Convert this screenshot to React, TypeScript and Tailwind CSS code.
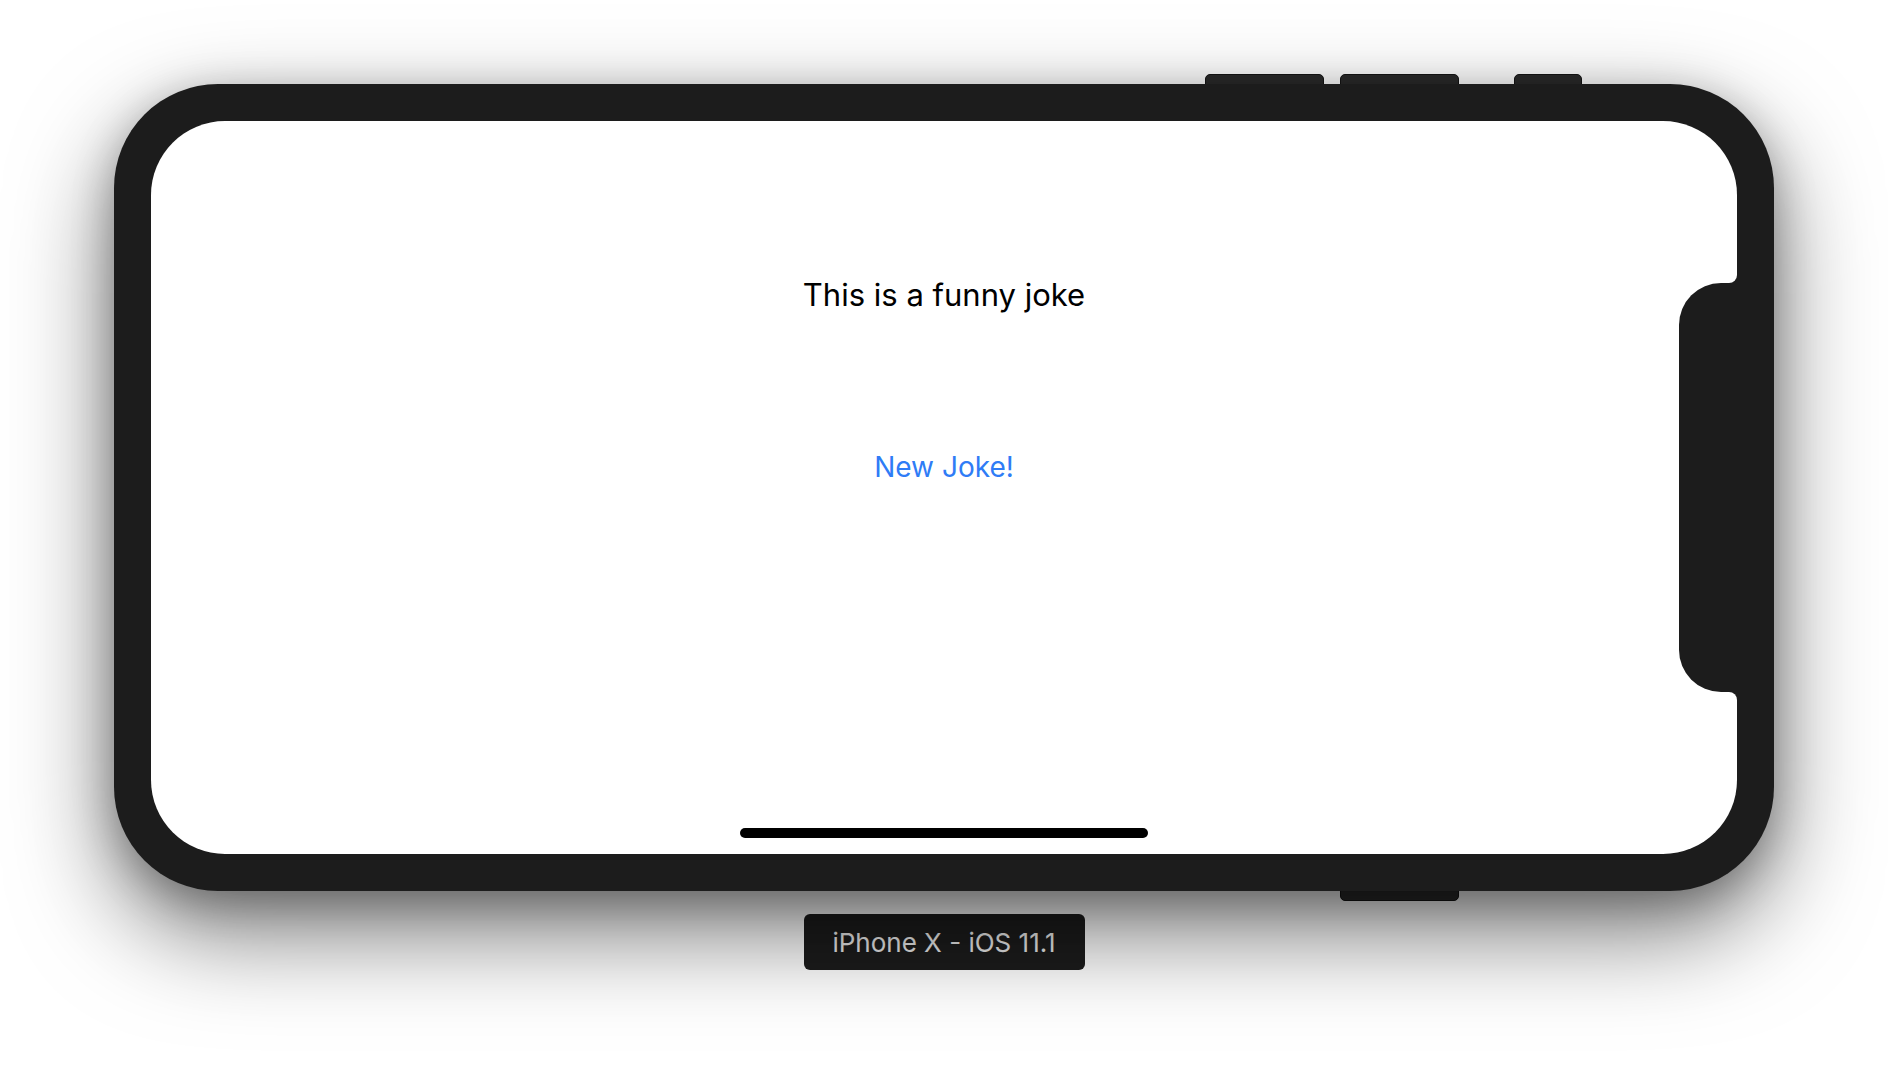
import React from 'react';

const sans = 'font-["Inter","Noto_Sans",sans-serif]';

function SideButton({ width, top }: { width: string; top?: boolean }) {
  return (
    <div
      className={`h-[11px] shrink-0 bg-[#2b2b2b] border border-[#151515] ${width} ${
        top ? 'rounded-t-[5px]' : 'rounded-b-[5px]'
      }`}
    />
  );
}

function Fillet({ corner }: { corner: string }) {
  return (
    <div className="h-[8px] w-[8px] bg-[#1c1c1c]">
      <div className={`h-full w-full bg-white ${corner}`} />
    </div>
  );
}

function Screen() {
  return (
    <div className="relative flex h-full w-full flex-col items-center overflow-hidden rounded-[74px] bg-white">
      <p className={`${sans} mt-[158px] text-[31px] leading-none text-black`}>This is a funny joke</p>
      <button className={`${sans} mt-[143px] text-[28px] leading-none text-[#2f7cf6]`}>New Joke!</button>
      <div className="mt-auto mb-[16px] h-[10px] w-[408px] rounded-full bg-black" />

      {/* sensor housing, seen from the side in landscape */}
      <div className="absolute right-0 top-[154px] flex flex-col items-end">
        <Fillet corner="rounded-br-[8px]" />
        <div className="h-[409px] w-[58px] rounded-l-[42px] bg-[#1c1c1c]" />
        <Fillet corner="rounded-tr-[8px]" />
      </div>
    </div>
  );
}

export default function App() {
  return (
    <div className="flex h-[1070px] w-[1888px] flex-col items-center overflow-hidden bg-white pt-[74px]">
      <div className="flex w-[1660px] flex-col">
        <div className="z-0 -mb-[1px] flex pl-[1091px]">
          <SideButton width="w-[119px]" top />
          <SideButton width="ml-[16px] w-[119px]" top />
          <SideButton width="ml-[55px] w-[68px]" top />
        </div>
        <div className="z-10 h-[807px] w-full rounded-[104px] bg-[#1c1c1c] p-[37px] shadow-[0_40px_100px_rgba(0,0,0,0.55),0_10px_40px_rgba(0,0,0,0.25)]">
          <Screen />
        </div>
        <div className="-mt-[1px] flex pl-[1226px]">
          <SideButton width="w-[119px]" />
        </div>
      </div>
      <div
        className={`${sans} mt-[13px] flex h-[56px] w-[281px] items-center justify-center rounded-[6px] bg-[#1c1c1c] text-[26px] text-[#ececec]`}
      >
        iPhone X - iOS 11.1
      </div>
    </div>
  );
}
